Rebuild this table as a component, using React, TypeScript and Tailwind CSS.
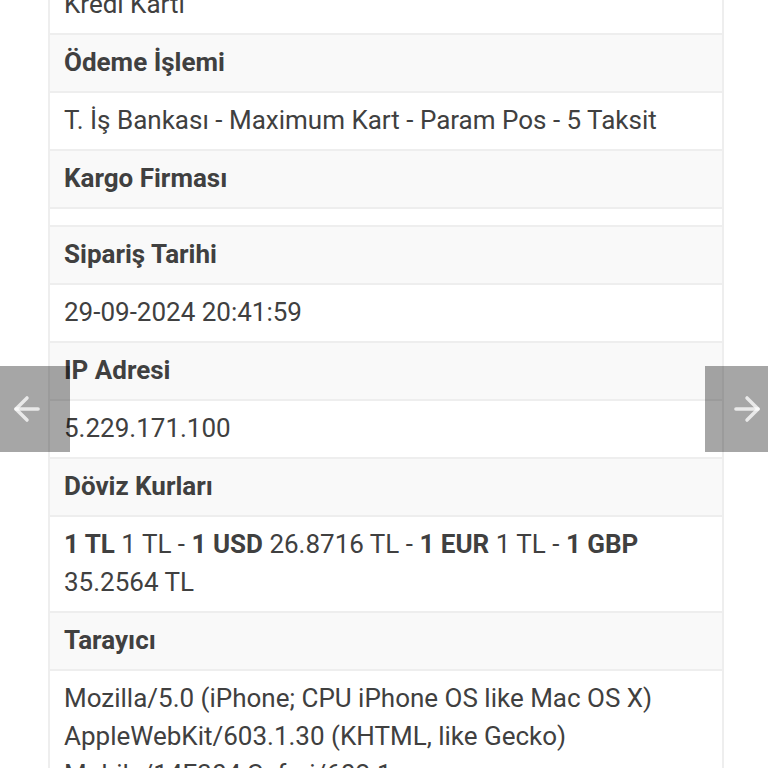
import React from 'react';
import { ArrowLeft, ArrowRight } from 'lucide-react';

type Row = { label: string; value: React.ReactNode };

const rows: Row[] = [
  { label: 'Ödeme İşlemi', value: 'T. İş Bankası - Maximum Kart - Param Pos - 5 Taksit' },
  { label: 'Kargo Firması', value: null },
  { label: 'Sipariş Tarihi', value: '29-09-2024 20:41:59' },
  { label: 'IP Adresi', value: '5.229.171.100' },
  {
    label: 'Döviz Kurları',
    value: (
      <>
        <b>1 TL</b> 1 TL - <b>1 USD</b> 26.8716 TL - <b>1 EUR</b> 1 TL - <b>1 GBP</b> 35.2564 TL
      </>
    ),
  },
  {
    label: 'Tarayıcı',
    value:
      'Mozilla/5.0 (iPhone; CPU iPhone OS like Mac OS X) AppleWebKit/603.1.30 (KHTML, like Gecko) Mobile/14E304 Safari/602.1',
  },
];

const App: React.FC = () => {
  return (
    <div
      className="relative h-[768px] w-[768px] overflow-hidden bg-white text-[26px] leading-[38px] text-[#404040]"
      style={{ fontFamily: 'Roboto, "Liberation Sans", sans-serif' }}
    >
      <div className="mx-[48px] mt-[-23px] w-[676px] border-x-2 border-[#eeeeee]">
        <div className="border-b-2 border-[#eeeeee] px-[14px] pt-[8px] pb-[10px]">Kredi Kartı</div>
        {rows.map((r) => (
          <React.Fragment key={r.label}>
            <div className="border-b-2 border-[#eeeeee] bg-[#f9f9f9] px-[14px] pt-[8px] pb-[10px] font-bold">
              {r.label}
            </div>
            <div
              className={`border-b-2 border-[#eeeeee] px-[14px] ${r.value === null ? 'h-[18px]' : 'pt-[8px] pb-[10px]'}`}
            >
              {r.value}
            </div>
          </React.Fragment>
        ))}
      </div>

      <div className="absolute left-0 top-[366px] flex h-[86px] w-[70px] items-center justify-start bg-black/35 pl-[8px]">
        <ArrowLeft size={38} strokeWidth={2.2} className="text-white/75" />
      </div>
      <div className="absolute right-0 top-[366px] flex h-[86px] w-[63px] items-center justify-end bg-black/35 pr-[2px]">
        <ArrowRight size={38} strokeWidth={2.2} className="text-white/75" />
      </div>
    </div>
  );
};

export default App;
